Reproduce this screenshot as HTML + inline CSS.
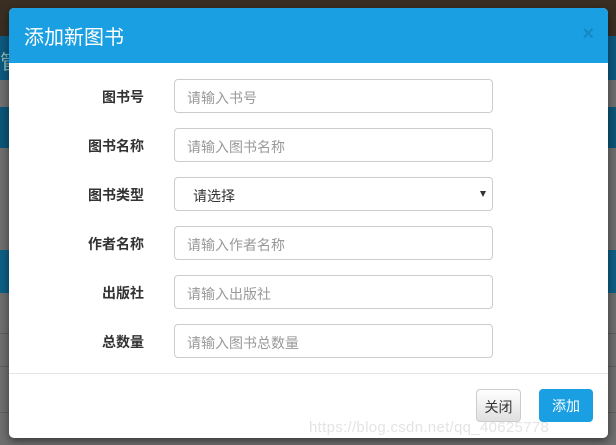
<!DOCTYPE html>
<html><head><meta charset="utf-8"><style>
*{box-sizing:border-box;margin:0;padding:0}
body{width:616px;height:445px;overflow:hidden;position:relative;background:#6f6f6f;font-family:"Liberation Sans","Noto Sans CJK SC",sans-serif}
.b{position:absolute;left:0;width:616px}
.modal{position:absolute;left:9px;top:8px;width:599px;height:430px;background:#fff;border-radius:5px;overflow:hidden;box-shadow:0 3px 9px rgba(0,0,0,.5)}
.hd{height:55px;background:#1a9fe3;color:#fff;font-size:20px;padding:13px 0 0 15px}
.x{position:absolute;right:14px;top:15px;color:#138ac6;font-size:20px;font-weight:bold}
.lbl{position:absolute;left:0;width:135px;text-align:right;font-size:14px;font-weight:bold;color:#333}
.in{position:absolute;left:165px;width:319px;height:34px;border:1px solid #ccc;border-radius:4px;font-size:14px;color:#999;padding:8px 12px}
.sel{color:#333;padding-left:18px}
.sel:after{content:"";position:absolute;right:6px;top:13px;border-left:3px solid transparent;border-right:3px solid transparent;border-top:6px solid #333}
.ft{position:absolute;left:0;top:365px;width:599px;border-top:1px solid #e5e5e5}
.btn{position:absolute;top:381px;height:33px;border-radius:4px;font-size:14px;text-align:center;padding-top:7px}
.wm{position:absolute;left:300px;top:411px;font-size:15px;color:#e4e4e4;letter-spacing:.3px}
</style></head><body>
<div class="b" style="top:0;height:36px;background:#3a2e22"></div>
<div class="b" style="top:36px;height:44px;background:#0d5a80;color:#8bb;font-size:20px;padding:10px 0 0 0">管</div>
<div class="b" style="top:107px;height:41px;background:#0b5678"></div>
<div class="b" style="top:250px;height:43px;background:#0d5f85"></div>
<div class="b" style="top:333px;height:1px;background:#5e5e5e"></div>
<div class="b" style="top:366px;height:1px;background:#5e5e5e"></div>
<div class="b" style="top:412px;height:1px;background:#5e5e5e"></div>
<div class="modal">
<div class="hd">添加新图书</div><div class="x">×</div>
<div class="lbl" style="top:79px">图书号</div><div class="in" style="top:71px">请输入书号</div>
<div class="lbl" style="top:128px">图书名称</div><div class="in" style="top:120px">请输入图书名称</div>
<div class="lbl" style="top:177px">图书类型</div><div class="in sel" style="top:169px">请选择</div>
<div class="lbl" style="top:226px">作者名称</div><div class="in" style="top:218px">请输入作者名称</div>
<div class="lbl" style="top:275px">出版社</div><div class="in" style="top:267px">请输入出版社</div>
<div class="lbl" style="top:324px">总数量</div><div class="in" style="top:316px">请输入图书总数量</div>
<div class="ft"></div>
<div class="wm">https://blog.csdn.net/qq_40625778</div>
<div class="btn" style="left:467px;width:45px;border:1px solid #ccc;background:linear-gradient(#fff,#e0e0e0);color:#333">关闭</div>
<div class="btn" style="left:530px;width:54px;background:#1a9fe3;color:#fff">添加</div>
</div>
</body></html>
